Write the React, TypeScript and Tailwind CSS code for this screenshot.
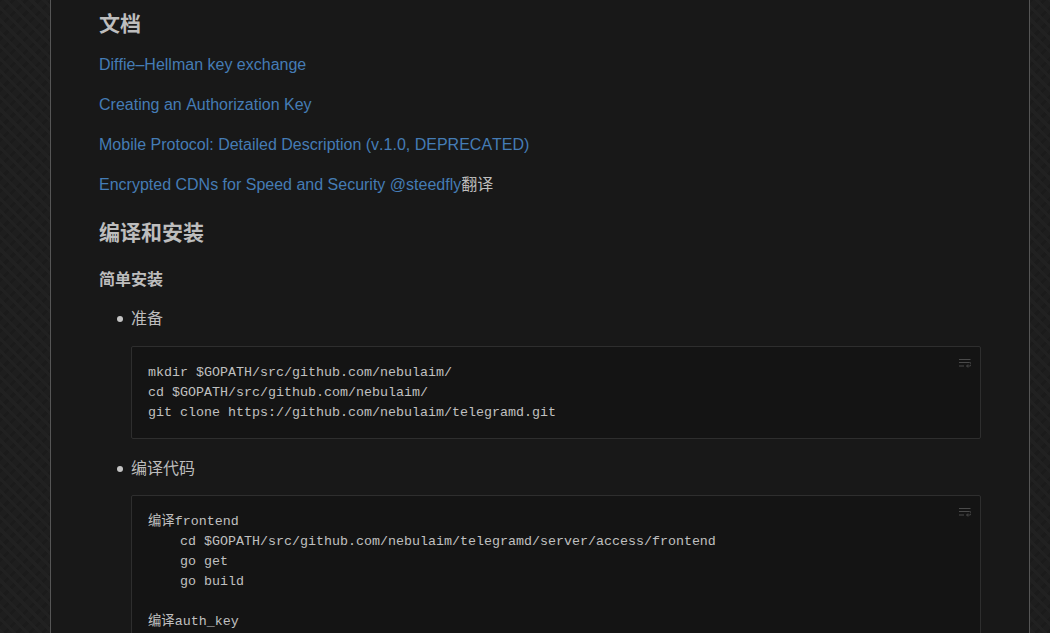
import { ReactNode } from "react";

const cjk = "font-['Liberation_Sans','Noto_Sans_CJK_SC',sans-serif]";

function WrapIcon() {
  return (
    <svg width="12" height="10" viewBox="0 0 12 10" fill="none" stroke="#4a4a4a" strokeWidth="1" className="absolute right-[9px] top-[11px]">
      <path d="M0 1.5h11.5" />
      <path d="M0 4.5h10.5a1.5 1.5 0 0 1 0 3.5H8" />
      <path d="M0 8h5" />
      <path d="M9 6.5 7.5 8 9 9.5" />
    </svg>
  );
}

function Code({ children, gap }: { children: ReactNode; gap: string }) {
  return (
    <div className={`relative border border-[#2e2e2e] rounded-[2px] bg-[#141414] px-4 pt-[16px] pb-[15px] ${gap}`}>
      <WrapIcon />
      <pre className="font-['Liberation_Mono','Noto_Sans_CJK_SC',monospace] text-[13.33px] leading-[20px] text-[#c0c0c0]">
        {children}
      </pre>
    </div>
  );
}

function Item({ label, children }: { label: string; children: ReactNode }) {
  return (
    <li className="relative pl-[32px]">
      <span className="absolute left-[18px] top-[11px] w-[6px] h-[6px] rounded-full bg-[#c4c4c4]" />
      <div className="text-[16px] leading-[28px] text-[#bdbdbd]">{label}</div>
      {children}
    </li>
  );
}

const links = [
  "Diffie–Hellman key exchange",
  "Creating an Authorization Key",
  "Mobile Protocol: Detailed Description (v.1.0, DEPRECATED)",
];

export default function App() {
  return (
    <div className={`h-[633px] overflow-hidden bg-[#1e1e1e] bg-[repeating-linear-gradient(45deg,#212121_0px,#212121_3px,transparent_3px,transparent_9px),repeating-linear-gradient(-45deg,#1b1b1b_0px,#1b1b1b_3px,transparent_3px,transparent_9px)] ${cjk}`}>
      <div className="ml-[50px] w-[980px] h-[633px] overflow-hidden border-x border-[#555555] bg-[#181818] px-[48px]">
        <h2 className="text-[21px] font-bold leading-[28px] text-[#bdbdbd] mt-[10px]">文档</h2>
        <div className="mt-[17px] text-[16px] leading-[20px] text-[#457cb5] [font-kerning:none] [font-variant-ligatures:none]">
          {links.map((l) => (
            <p key={l} className="mb-[20px]">
              <a>{l}</a>
            </p>
          ))}
          <p>
            <a>Encrypted CDNs for Speed and Security @steedfly</a>
            <span className="text-[#bdbdbd]">翻译</span>
          </p>
        </div>
        <h3 className="text-[21px] font-bold leading-[28px] text-[#bdbdbd] mt-[24px]">编译和安装</h3>
        <h4 className="text-[16px] font-bold leading-[24px] text-[#bdbdbd] mt-[21px]">简单安装</h4>
        <ul className="mt-[13px]">
          <Item label="准备">
            <Code gap="mt-[13px]">
              {"mkdir $GOPATH/src/github.com/nebulaim/\ncd $GOPATH/src/github.com/nebulaim/\ngit clone https://github.com/nebulaim/telegramd.git"}
            </Code>
          </Item>
          <div className="h-[16px]" />
          <Item label="编译代码">
            <Code gap="mt-[12px]">
              {"编译frontend\n    cd $GOPATH/src/github.com/nebulaim/telegramd/server/access/frontend\n    go get\n    go build\n\n编译auth_key"}
            </Code>
          </Item>
        </ul>
      </div>
    </div>
  );
}
